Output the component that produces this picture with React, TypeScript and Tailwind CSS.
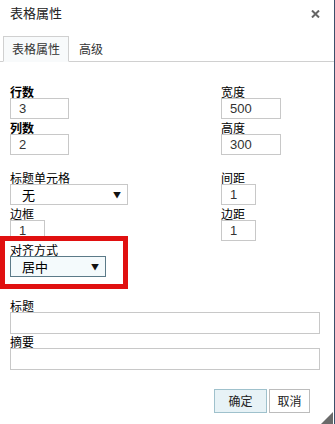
import { useState } from 'react'

const font = { fontFamily: '"Noto Sans CJK SC", "Liberation Sans", sans-serif' }

function Label({ text, bold = false, h = 'h-[15px]' }: { text: string; bold?: boolean; h?: string }) {
  return (
    <div className={`${h} flex items-end text-[12px] leading-[13px] text-black ${bold ? 'font-bold' : ''}`}>
      {text}
    </div>
  )
}

function NumInput({ value, w = 'w-[60px]' }: { value: string; w?: string }) {
  return (
    <div
      className={`${w} h-[21px] border border-[#c8c8c8] bg-white pl-[8px] flex items-center text-[13px] text-[#333]`}
      style={{ fontFamily: '"Liberation Sans", sans-serif' }}
    >
      {value}
    </div>
  )
}

function Select({ value, w, focused = false }: { value: string; w: string; focused?: boolean }) {
  return (
    <div
      className={`${w} h-[21px] border flex items-center justify-between pl-[11px] pr-[6px] text-[13px] text-black ${
        focused ? 'border-[#5b7a88] bg-[#f4fafc]' : 'border-[#c8c8c8] bg-white'
      }`}
    >
      <span>{value}</span>
      <span className="text-[8px] leading-none text-[#111]">▼</span>
    </div>
  )
}

export default function App() {
  const [tab] = useState(0)
  return (
    <div className="relative w-[335px] h-[424px] bg-white border-r border-[#3b4f6b] overflow-hidden" style={font}>
      {/* header */}
      <div className="h-[36px] flex items-start justify-between pl-[10px] pr-[14px] pt-[5px]">
        <span className="text-[13px] leading-[16px] text-[#222]">表格属性</span>
        <svg width="9" height="8" viewBox="0 0 9 8" className="mt-[5px]">
          <path d="M1 0.5 L8 7.5 M8 0.5 L1 7.5" stroke="#666" strokeWidth="2" />
        </svg>
      </div>

      {/* tabs */}
      <div className="flex items-end h-[26px] border-b border-[#d0d0d0] pl-[3px]">
        <div
          className={`h-[26px] w-[66px] -mb-px flex items-center justify-center text-[12px] text-[#333] border border-[#d0d0d0] ${
            tab === 0 ? 'bg-[#f8fafb] border-b-[#f8fafb]' : ''
          }`}
        >
          表格属性
        </div>
        <div className="h-[25px] px-[10px] flex items-center text-[12px] text-[#333]">高级</div>
      </div>

      {/* body */}
      <div className="pt-[21px]">
        <div className="flex">
          <div className="pl-[10px] w-[221px]">
            <Label text="行数" bold />
            <NumInput value="3" w="w-[59px]" />
            <Label text="列数" bold />
            <NumInput value="2" w="w-[59px]" />
          </div>
          <div>
            <Label text="宽度" />
            <NumInput value="500" />
            <Label text="高度" />
            <NumInput value="300" />
          </div>
        </div>

        <div className="flex mt-[14px]">
          <div className="pl-[10px] w-[221px]">
            <Label text="标题单元格" />
            <Select value="无" w="w-[118px]" />
            <Label text="边框" />
            <NumInput value="1" w="w-[35px]" />
          </div>
          <div>
            <Label text="间距" />
            <NumInput value="1" w="w-[35px]" />
            <Label text="边距" />
            <NumInput value="1" w="w-[35px]" />
          </div>
        </div>

        {/* highlighted alignment */}
        <div className="relative -mt-[5px] w-[128px] border-[5px] border-[#e01010] pl-[5px] pb-[7px] bg-white">
          <Label text="对齐方式" />
          <Select value="居中" w="w-[96px]" focused />
        </div>

        <div className="px-[10px] pr-[14px] mt-[8px]">
          <Label text="标题" />
          <div className="h-[22px] border border-[#c8c8c8]" />
          <Label text="摘要" h="h-[14px]" />
          <div className="h-[22px] border border-[#c8c8c8]" />
        </div>

        <div className="flex justify-end gap-[2px] pr-[24px] mt-[19px]">
          <button className="w-[53px] h-[24px] border border-[#9fc1cc] bg-[#e7f2f6] text-[12px] text-[#222]">确定</button>
          <button className="w-[41px] h-[24px] border border-[#bcbcbc] bg-white text-[12px] text-[#222]">取消</button>
        </div>
      </div>

      {/* resize grip */}
      <svg width="12" height="12" viewBox="0 0 12 12" className="absolute right-[1px] bottom-0">
        <path d="M12 0 L12 12 L0 12 Z" fill="#6a6a6a" />
      </svg>
    </div>
  )
}
